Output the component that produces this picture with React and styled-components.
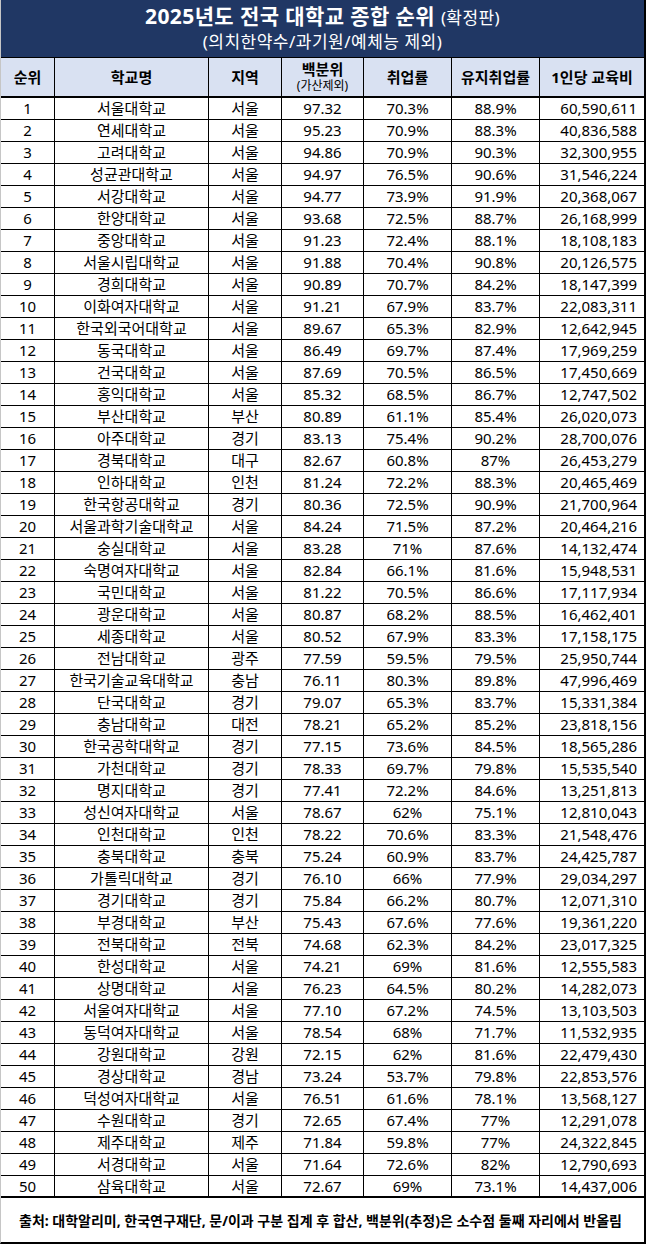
import React from "react";
import styled, { createGlobalStyle, css } from "styled-components";

const GlobalStyle = createGlobalStyle`
  html, body {
    margin: 0;
    padding: 0;
    background: #fff;
  }
  body {
    font-family: "Noto Sans", "Noto Sans CJK KR", sans-serif;
    color: #000;
  }
  * {
    box-sizing: border-box;
  }
`;

const cols = "54px 154px 73px 82px 88px 88px 104px";

const rows = [
  [1, "서울대학교", "서울", "97.32", "70.3%", "88.9%", "60,590,611"],
  [2, "연세대학교", "서울", "95.23", "70.9%", "88.3%", "40,836,588"],
  [3, "고려대학교", "서울", "94.86", "70.9%", "90.3%", "32,300,955"],
  [4, "성균관대학교", "서울", "94.97", "76.5%", "90.6%", "31,546,224"],
  [5, "서강대학교", "서울", "94.77", "73.9%", "91.9%", "20,368,067"],
  [6, "한양대학교", "서울", "93.68", "72.5%", "88.7%", "26,168,999"],
  [7, "중앙대학교", "서울", "91.23", "72.4%", "88.1%", "18,108,183"],
  [8, "서울시립대학교", "서울", "91.88", "70.4%", "90.8%", "20,126,575"],
  [9, "경희대학교", "서울", "90.89", "70.7%", "84.2%", "18,147,399"],
  [10, "이화여자대학교", "서울", "91.21", "67.9%", "83.7%", "22,083,311"],
  [11, "한국외국어대학교", "서울", "89.67", "65.3%", "82.9%", "12,642,945"],
  [12, "동국대학교", "서울", "86.49", "69.7%", "87.4%", "17,969,259"],
  [13, "건국대학교", "서울", "87.69", "70.5%", "86.5%", "17,450,669"],
  [14, "홍익대학교", "서울", "85.32", "68.5%", "86.7%", "12,747,502"],
  [15, "부산대학교", "부산", "80.89", "61.1%", "85.4%", "26,020,073"],
  [16, "아주대학교", "경기", "83.13", "75.4%", "90.2%", "28,700,076"],
  [17, "경북대학교", "대구", "82.67", "60.8%", "87%", "26,453,279"],
  [18, "인하대학교", "인천", "81.24", "72.2%", "88.3%", "20,465,469"],
  [19, "한국항공대학교", "경기", "80.36", "72.5%", "90.9%", "21,700,964"],
  [20, "서울과학기술대학교", "서울", "84.24", "71.5%", "87.2%", "20,464,216"],
  [21, "숭실대학교", "서울", "83.28", "71%", "87.6%", "14,132,474"],
  [22, "숙명여자대학교", "서울", "82.84", "66.1%", "81.6%", "15,948,531"],
  [23, "국민대학교", "서울", "81.22", "70.5%", "86.6%", "17,117,934"],
  [24, "광운대학교", "서울", "80.87", "68.2%", "88.5%", "16,462,401"],
  [25, "세종대학교", "서울", "80.52", "67.9%", "83.3%", "17,158,175"],
  [26, "전남대학교", "광주", "77.59", "59.5%", "79.5%", "25,950,744"],
  [27, "한국기술교육대학교", "충남", "76.11", "80.3%", "89.8%", "47,996,469"],
  [28, "단국대학교", "경기", "79.07", "65.3%", "83.7%", "15,331,384"],
  [29, "충남대학교", "대전", "78.21", "65.2%", "85.2%", "23,818,156"],
  [30, "한국공학대학교", "경기", "77.15", "73.6%", "84.5%", "18,565,286"],
  [31, "가천대학교", "경기", "78.33", "69.7%", "79.8%", "15,535,540"],
  [32, "명지대학교", "경기", "77.41", "72.2%", "84.6%", "13,251,813"],
  [33, "성신여자대학교", "서울", "78.67", "62%", "75.1%", "12,810,043"],
  [34, "인천대학교", "인천", "78.22", "70.6%", "83.3%", "21,548,476"],
  [35, "충북대학교", "충북", "75.24", "60.9%", "83.7%", "24,425,787"],
  [36, "가톨릭대학교", "경기", "76.10", "66%", "77.9%", "29,034,297"],
  [37, "경기대학교", "경기", "75.84", "66.2%", "80.7%", "12,071,310"],
  [38, "부경대학교", "부산", "75.43", "67.6%", "77.6%", "19,361,220"],
  [39, "전북대학교", "전북", "74.68", "62.3%", "84.2%", "23,017,325"],
  [40, "한성대학교", "서울", "74.21", "69%", "81.6%", "12,555,583"],
  [41, "상명대학교", "서울", "76.23", "64.5%", "80.2%", "14,282,073"],
  [42, "서울여자대학교", "서울", "77.10", "67.2%", "74.5%", "13,103,503"],
  [43, "동덕여자대학교", "서울", "78.54", "68%", "71.7%", "11,532,935"],
  [44, "강원대학교", "강원", "72.15", "62%", "81.6%", "22,479,430"],
  [45, "경상대학교", "경남", "73.24", "53.7%", "79.8%", "22,853,576"],
  [46, "덕성여자대학교", "서울", "76.51", "61.6%", "78.1%", "13,568,127"],
  [47, "수원대학교", "경기", "72.65", "67.4%", "77%", "12,291,078"],
  [48, "제주대학교", "제주", "71.84", "59.8%", "77%", "24,322,845"],
  [49, "서경대학교", "서울", "71.64", "72.6%", "82%", "12,790,693"],
  [50, "삼육대학교", "서울", "72.67", "69%", "73.1%", "14,437,006"],
];

const Sheet = styled.div`
  width: 646px;
  border-left: 1px solid #c6c6c6;
  border-right: 2px solid #000;
  border-bottom: 2px solid #000;
`;

const TitleBar = styled.div`
  height: 58px;
  background: #203764;
  color: #fff;
  border-bottom: 1px solid #000;
  display: flex;
  flex-direction: column;
  align-items: center;
  justify-content: center;
  gap: 1px;
`;

const Title = styled.div`
  font-size: 21px;
  font-weight: 700;
  line-height: 25px;
  letter-spacing: 0.4px;
`;

const TitleNote = styled.span`
  font-size: 17px;
  font-weight: 400;
`;

const Subtitle = styled.div`
  font-size: 17px;
  font-weight: 400;
  line-height: 22px;
  letter-spacing: 0.5px;
`;

const gridRow = css`
  display: grid;
  grid-template-columns: ${cols};
`;

const HeadRow = styled.div`
  ${gridRow};
  height: 40px;
  background: #d9e1f2;
  border-bottom: 2px solid #000;
`;

const HeadCell = styled.div`
  display: flex;
  flex-direction: column;
  align-items: center;
  justify-content: center;
  font-size: 15px;
  font-weight: 700;
  line-height: 18px;
  border-right: ${p => (p.$last ? "none" : "1px solid #000")};
`;

const HeadSub = styled.span`
  font-size: 12px;
  font-weight: 400;
  line-height: 16px;
`;

const Row = styled.div`
  ${gridRow};
  height: 22px;
  border-bottom: ${p => (p.$last ? "2px" : "1px")} solid #000;
`;

const Cell = styled.div`
  display: flex;
  align-items: center;
  justify-content: ${p => (p.$align === "right" ? "flex-end" : "center")};
  padding-right: ${p => (p.$align === "right" ? "7px" : "0")};
  font-size: 15px;
  line-height: 21px;
  white-space: nowrap;
  border-right: ${p => (p.$last ? "none" : "1px solid #000")};
`;

const Footer = styled.div`
  height: 44px;
  display: flex;
  align-items: center;
  padding-left: 18px;
  font-size: 14px;
  font-weight: 700;
  white-space: nowrap;
`;

const headers = ["순위", "학교명", "지역", null, "취업률", "유지취업률", "1인당 교육비"];

export default function App() {
  return (
    <>
      <GlobalStyle />
      <Sheet>
        <TitleBar>
          <Title>
            2025년도 전국 대학교 종합 순위 <TitleNote>(확정판)</TitleNote>
          </Title>
          <Subtitle>(의치한약수/과기원/예체능 제외)</Subtitle>
        </TitleBar>
        <HeadRow>
          {headers.map((h, i) =>
            h === null ? (
              <HeadCell key={i}>
                백분위
                <HeadSub>(가산제외)</HeadSub>
              </HeadCell>
            ) : (
              <HeadCell key={i} $last={i === headers.length - 1}>
                {h}
              </HeadCell>
            )
          )}
        </HeadRow>
        {rows.map((r, idx) => (
          <Row key={r[0]} $last={idx === rows.length - 1}>
            <Cell>{r[0]}</Cell>
            <Cell>{r[1]}</Cell>
            <Cell>{r[2]}</Cell>
            <Cell>{r[3]}</Cell>
            <Cell>{r[4]}</Cell>
            <Cell>{r[5]}</Cell>
            <Cell $align="right" $last>
              {r[6]}
            </Cell>
          </Row>
        ))}
        <Footer>
          출처: 대학알리미, 한국연구재단, 문/이과 구분 집계 후 합산, 백분위(추정)은 소수점 둘째 자리에서 반올림
        </Footer>
      </Sheet>
    </>
  );
}
